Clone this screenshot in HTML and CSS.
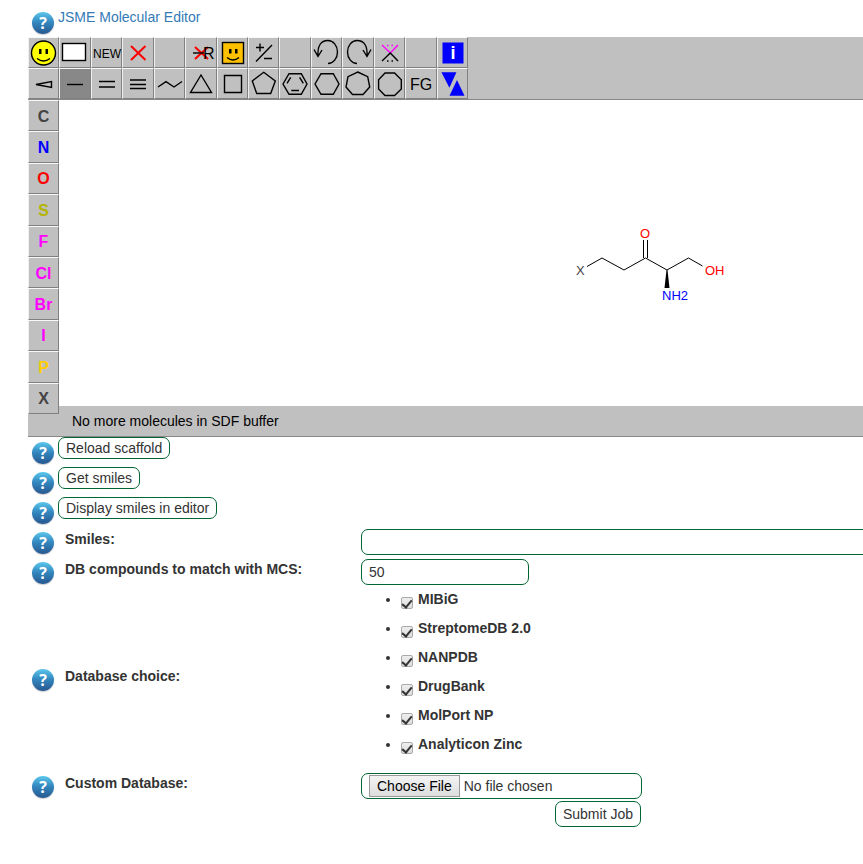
FILE: index.html
```html
<!DOCTYPE html>
<html lang="en">
<head>
<meta charset="utf-8">
<meta name="viewport" content="width=device-width, initial-scale=1">
<title>JSME Molecular Editor</title>
<link rel="stylesheet" href="styles.css">
</head>
<body>
<main class="page">
  <div class="row intro">
    <button type="button" class="help" aria-label="Help">?</button>
    <a class="editor-link" href="#editor">JSME Molecular Editor</a>
  </div>

  <section class="editor" id="editor">
    <div class="toolbar">
      <div class="tools">
        <button type="button" class="tool" aria-label="Get smiles"><svg viewBox="0 0 31 31"><circle cx="15.5" cy="16" r="12" fill="#ff0"/><path d="M9 21.5Q15.5 26.5 22 21.5"/><path class="eyes" d="M11 12h2.5v5H11zM17.5 12H20v5h-2.5z"/></svg></button>
        <button type="button" class="tool" aria-label="Clear"><svg viewBox="0 0 31 31"><rect x="3.5" y="6.5" width="23" height="17" fill="#fff"/></svg></button>
        <button type="button" class="tool" aria-label="New"><svg viewBox="0 0 31 31"><text class="t-small" x="2" y="21">NEW</text></svg></button>
        <button type="button" class="tool" aria-label="Delete"><svg viewBox="0 0 31 31"><path class="red" d="M9 9l14.5 14M23.5 9L9 23"/></svg></button>
        <button type="button" class="tool" aria-label="Empty"></button>
        <button type="button" class="tool" aria-label="Delete group"><svg viewBox="0 0 31 31"><path class="red" d="M10 10l13 12M23 10L10 22"/><path d="M8 16h11"/><text x="18" y="22">R</text></svg></button>
        <button type="button" class="tool" aria-label="Query"><svg viewBox="0 0 31 31"><rect x="5.5" y="5.5" width="21" height="21" fill="#ffc000"/><path d="M10 20.5Q16 25.5 22 20.5"/><path class="eyes" d="M12 12h2.5v4.5H12zM18 12h2.5v4.5H18z"/></svg></button>
        <button type="button" class="tool" aria-label="Charge"><svg viewBox="0 0 31 31"><path d="M8 24.5L24 8M8 10.500h8M12 6.500v8M16 21.500h8"/></svg></button>
        <button type="button" class="tool" aria-label="Empty"></button>
        <button type="button" class="tool" aria-label="Undo"><svg viewBox="0 0 31 31"><path d="M7 19.5Q6 3.5 17 3.5A9.5 11.5 0 0 1 17 26.5M3 12.5l4 7 4-6.5"/></svg></button>
        <button type="button" class="tool" aria-label="Redo"><svg viewBox="0 0 31 31"><path d="M25 19.5Q26 3.5 15 3.5A9.5 11.5 0 0 0 15 26.5M29 12.5l-4 7-4-6.5"/></svg></button>
        <button type="button" class="tool" aria-label="Stereo"><svg viewBox="0 0 31 31"><path class="magenta" d="M8 8l8.3 8L24 8M13 8.5h1.5M17.5 8.5H19"/><path d="M8 24l8.3-8 7.7 8M13 24h1.5M17.5 24H19"/></svg></button>
        <button type="button" class="tool" aria-label="Empty"></button>
        <button type="button" class="tool" aria-label="Info"><svg viewBox="0 0 31 31"><path class="blue" d="M5.5 5.5h21v21h-21z"/><text class="t-info" x="13.5" y="22">i</text></svg></button>

        <button type="button" class="tool" aria-label="Stereo bond"><svg viewBox="0 0 31 31"><path d="M8 16.5l15.5-3v6z"/></svg></button>
        <button type="button" class="tool active" aria-label="Single bond"><svg viewBox="0 0 31 31"><path d="M8 16.500h16"/></svg></button>
        <button type="button" class="tool" aria-label="Double bond"><svg viewBox="0 0 31 31"><path d="M8 13.500h16M8 19h16"/></svg></button>
        <button type="button" class="tool" aria-label="Triple bond"><svg viewBox="0 0 31 31"><path d="M8 12h16M8 16.500h16M8 20.500h16"/></svg></button>
        <button type="button" class="tool" aria-label="Chain"><svg viewBox="0 0 31 31"><path d="M4 19l8-5.300 8 5.300 8-5.500"/></svg></button>
        <button type="button" class="tool" aria-label="Three ring"><svg viewBox="0 0 31 31"><path d="M16 7L5.500 24.500h21z"/></svg></button>
        <button type="button" class="tool" aria-label="Four ring"><svg viewBox="0 0 31 31"><path d="M7.500 7.500h17v17h-17z"/></svg></button>
        <button type="button" class="tool" aria-label="Five ring"><svg viewBox="0 0 31 31"><path d="M15.700 4.300L27.300 13l-4.600 12.500h-14L4.300 13z"/></svg></button>
        <button type="button" class="tool" aria-label="Benzene ring"><svg viewBox="0 0 31 31"><path d="M4 16L10 5.700h12.300L28 16l-5.700 10.300H10zM8 15.300l3.700-6M20.600 9.300l3.700 6M12.300 22.500H20"/></svg></button>
        <button type="button" class="tool" aria-label="Six ring"><svg viewBox="0 0 31 31"><path d="M4 16L10 5.700h12.300L28 16l-5.700 10.300H10z"/></svg></button>
        <button type="button" class="tool" aria-label="Seven ring"><svg viewBox="0 0 31 31"><path d="M15.700 4l10 4.700 2 10.300-6.700 7.500H10.500L4 19 6 8.700z"/></svg></button>
        <button type="button" class="tool" aria-label="Eight ring"><svg viewBox="0 0 31 31"><path d="M11 5h9.600l6.700 6.700v9.300l-6.700 6.500H11L4.600 21v-9.300z"/></svg></button>
        <button type="button" class="tool" aria-label="Functional groups"><svg viewBox="0 0 31 31"><text x="5" y="22">FG</text></svg></button>
        <button type="button" class="tool" aria-label="Reaction"><svg viewBox="0 0 31 31"><path class="blue" d="M4.400 4.300h15l-7 15.500zM20 12l7.500 15.700h-15z"/></svg></button>
      </div>
    </div>

    <div class="workspace">
      <div class="atoms">
        <button type="button" class="tool atom">C</button>
        <button type="button" class="tool atom nitrogen">N</button>
        <button type="button" class="tool atom oxygen">O</button>
        <button type="button" class="tool atom sulfur">S</button>
        <button type="button" class="tool atom halogen">F</button>
        <button type="button" class="tool atom halogen">Cl</button>
        <button type="button" class="tool atom halogen">Br</button>
        <button type="button" class="tool atom halogen">I</button>
        <button type="button" class="tool atom phosphorus">P</button>
        <button type="button" class="tool atom">X</button>
      </div>
      <div class="canvas">
        <div class="drawing">
          <svg class="molecule" width="180" height="90" viewBox="0 0 180 90" role="img" aria-label="Molecule">
            <path d="M27 46.500L42 38l22 12 21.500-12L107 50l21.500-12 14 8M83.500 38V20M87.500 38V20"/>
            <path class="wedge" d="M106.500 50h1l2 18h-5z"/>
            <text x="16" y="55" fill="#444">X</text>
            <text x="80" y="18" fill="#f00">O</text>
            <text x="145" y="55" fill="#f00">OH</text>
            <text x="102" y="80" fill="#00f">NH2</text>
          </svg>
        </div>
        <div class="status">No more molecules in SDF buffer</div>
      </div>
    </div>
  </section>

  <form class="job" onsubmit="return false">
    <div class="row">
      <button type="button" class="help" aria-label="Help">?</button>
      <button type="button" class="btn">Reload scaffold</button>
    </div>
    <div class="row">
      <button type="button" class="help" aria-label="Help">?</button>
      <button type="button" class="btn">Get smiles</button>
    </div>
    <div class="row">
      <button type="button" class="help" aria-label="Help">?</button>
      <button type="button" class="btn">Display smiles in editor</button>
    </div>
    <div class="row field">
      <button type="button" class="help" aria-label="Help">?</button>
      <label class="name" for="smiles">Smiles:</label>
      <input class="box wide" id="smiles" type="text">
    </div>
    <div class="row field">
      <button type="button" class="help" aria-label="Help">?</button>
      <label class="name" for="count">DB compounds to match with MCS:</label>
      <input class="box count" id="count" type="text" value="50">
    </div>
    <div class="row field">
      <button type="button" class="help" aria-label="Help">?</button>
      <span class="name" id="choice">Database choice:</span>
      <ul class="databases" aria-labelledby="choice">
        <li><label><input type="checkbox" checked>MIBiG</label></li>
        <li><label><input type="checkbox" checked>StreptomeDB 2.0</label></li>
        <li><label><input type="checkbox" checked>NANPDB</label></li>
        <li><label><input type="checkbox" checked>DrugBank</label></li>
        <li><label><input type="checkbox" checked>MolPort NP</label></li>
        <li><label><input type="checkbox" checked>Analyticon Zinc</label></li>
      </ul>
    </div>
    <div class="row field">
      <button type="button" class="help" aria-label="Help">?</button>
      <label class="name" for="custom">Custom Database:</label>
      <input class="box file" id="custom" type="file">
    </div>
    <div class="submit">
      <button type="submit" class="btn tall">Submit Job</button>
    </div>
  </form>
</main>
</body>
</html>
```
FILE: styles.css
```css
* {
  box-sizing: border-box;
}

body {
  margin: 0;
  background: #fff;
  color: #333;
  font: 14px/20px "Liberation Sans", Arial, sans-serif;
}

button,
input {
  font: inherit;
  color: inherit;
  margin: 0;
}

.page {
  padding: 7px 0 24px 28px;
  overflow-x: hidden;
}

/* Rows with a help icon in front */

.row {
  display: grid;
  grid-template-columns: 30px 1fr;
  min-height: 30px;
  align-items: start;
  justify-items: start;
}

.row.field {
  grid-template-columns: 30px 303px 1fr;
}

.help {
  width: 22px;
  height: 22px;
  margin: 2px 0 0 4px;
  padding: 0;
  align-self: center;
  border: 0;
  border-radius: 50%;
  background: linear-gradient(#5cc8ec, #3489c1 45%, #27578f);
  box-shadow: 0 1px 1px #ccc;
  color: #fff;
  font: bold 16px/22px "Open Sans", sans-serif;
  text-align: center;
}

.editor-link {
  color: #337ab7;
  text-decoration: none;
}

/* Editor */

.toolbar {
  background: #c0c0c0;
  border-bottom: 1px solid #888;
}

.tools {
  display: grid;
  grid-template-columns: repeat(14, 1fr);
  grid-auto-rows: 31px;
  width: 440px;
}

.tool {
  min-width: 0;
  padding: 0;
  border: 1px solid;
  border-color: #f8f8f8 #808080 #808080 #f0f0f0;
  background: #c0c0c0;
  color: #444;
}

.tool.active {
  background: #888;
}

.tool svg {
  display: block;
  width: 31px;
  height: 31px;
  margin: -1px;
  fill: none;
  stroke: #000;
  stroke-width: 1.4;
}

.tool text {
  fill: #000;
  stroke: none;
  font-size: 16px;
}

.tool .t-small {
  font-size: 12px;
}

.tool .t-info {
  fill: #fff;
  font-size: 18px;
  font-weight: bold;
}

.tool .eyes {
  fill: #000;
  stroke: none;
}

.tool .red {
  stroke: #f00;
  stroke-width: 2;
}

.tool .magenta {
  stroke: #f0f;
}

.tool .blue {
  fill: #00f;
  stroke: none;
}

.workspace {
  display: grid;
  grid-template-columns: 31px 1fr;
  background: #c0c0c0;
  border-bottom: 1px solid #888;
}

.atoms {
  display: grid;
  grid-template-rows: repeat(10, 1fr);
  height: 314px;
}

.atom {
  padding-top: 2px;
  font-size: 16px;
  font-weight: bold;
}

.nitrogen { color: #00f; }
.oxygen { color: #f00; }
.sulfur { color: #b4b400; }
.halogen { color: #f0f; }
.phosphorus { color: #fc0; }

.canvas {
  display: flex;
  flex-direction: column;
}

.drawing {
  display: flex;
  justify-content: flex-end;
  align-items: center;
  height: 306px;
  padding: 24px 123px 0 0;
  background: #fff;
}

.molecule {
  fill: none;
  stroke: #000;
}

.molecule text {
  stroke: none;
  font-size: 13px;
}

.molecule .wedge {
  fill: #000;
  stroke: none;
}

.status {
  padding: 5px 13px;
  color: #000;
  line-height: 20px;
}

/* Job form */

.btn {
  height: 22px;
  padding: 0 7px;
  border: 1px solid #063;
  border-radius: 7px;
  background: #fff;
  line-height: 20px;
}

.btn.tall {
  height: 26px;
}

.name {
  align-self: center;
  padding: 0 0 6px 7px;
  font-weight: bold;
}

.box {
  height: 26px;
  margin-top: 2px;
  padding: 0 7px;
  border: 1px solid #063;
  border-radius: 7px;
  background: #fff;
}

.wide {
  width: calc(100% + 20px);
}

.count {
  width: 168px;
}

.file {
  width: 281px;
  padding-top: 1px;
}

.file::file-selector-button {
  height: 22px;
  margin: 0 4px 0 0;
  padding: 0 7px;
  border: 1px solid #999;
  border-radius: 0;
  background: linear-gradient(#f4f4f4, #ddd);
  color: #000;
  font: inherit;
}

.databases {
  margin: 0 0 8px;
  padding: 2px 0 0 40px;
}

.databases li {
  height: 29px;
  font-weight: bold;
}

.databases input {
  display: inline-flex;
  justify-content: center;
  width: 12px;
  height: 12px;
  margin-right: 5px;
  vertical-align: -4px;
  appearance: none;
  border: 1px solid #aaa;
  border-radius: 2px;
  background: linear-gradient(#eee, #ddd);
}

.databases input:checked::before {
  content: "";
  width: 4px;
  height: 8px;
  border: solid #333;
  border-width: 0 2px 2px 0;
  transform: rotate(40deg);
}

.submit {
  display: flex;
  justify-content: flex-end;
  width: 613px;
}
```
